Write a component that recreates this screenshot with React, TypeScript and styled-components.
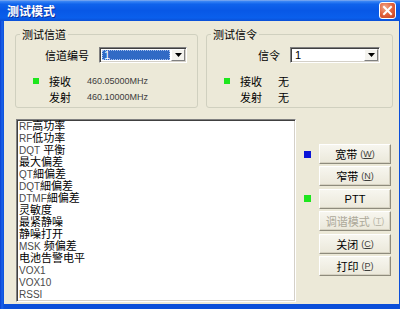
import styled, { createGlobalStyle } from 'styled-components';

const GlobalStyle = createGlobalStyle`
  html, body {
    margin: 0;
    padding: 0;
    background: #ffffff;
  }
  body {
    font-family: "Liberation Sans", "Noto Sans CJK SC", sans-serif;
    font-size: 11px;
    color: #000;
  }
`;

const listItems = [
  'RF高功率',
  'RF低功率',
  'DQT 平衡',
  '最大偏差',
  'QT細偏差',
  'DQT細偏差',
  'DTMF細偏差',
  '灵敏度',
  '最紧静噪',
  '静噪打开',
  'MSK 频偏差',
  '电池告警电平',
  'VOX1',
  'VOX10',
  'RSSI',
];

const sideButtons = [
  { label: '宽带', key: 'W', lamp: 'blue' },
  { label: '窄带', key: 'N', lamp: '' },
  { label: 'PTT', key: '', lamp: 'green' },
  { label: '调谐模式', key: 'T', lamp: '', disabled: true },
  { label: '关闭', key: 'C', lamp: '' },
  { label: '打印', key: 'P', lamp: '' },
];

// split latin runs so they can get the thinner grey look
const renderMixed = (text: string) =>
  text.split(/([A-Za-z0-9]+)/).map((part, i) =>
    /^[A-Za-z0-9]+$/.test(part) ? <Latin key={i}>{part}</Latin> : <span key={i}>{part}</span>
  );

const App = () => {
  return (
    <>
      <GlobalStyle />
      <Window>
        <TitleBar>
          <TitleText>测试模式</TitleText>
          <CloseButton>
            <svg width="11" height="11" viewBox="0 0 11 11">
              <path d="M2 2 L9 9 M9 2 L2 9" stroke="#fff" strokeWidth="2" strokeLinecap="square" />
            </svg>
          </CloseButton>
        </TitleBar>
        <Frame>
          <Body>
            <TopRow>
              <Group $width={183}>
                <Legend>测试信道</Legend>
                <SelectRow>
                  <FieldLabel>信道编号</FieldLabel>
                  <Combo $width={88}>
                    <ComboValue $selected>1</ComboValue>
                    <ComboArrow>
                      <svg width="7" height="4" viewBox="0 0 7 4">
                        <path d="M0 0 H7 L3.5 4 Z" fill="#000" />
                      </svg>
                    </ComboArrow>
                  </Combo>
                </SelectRow>
                <StatusGrid>
                  <Lamp $color="#1ee61e" />
                  <StatusLabel>接收</StatusLabel>
                  <Freq>460.05000MHz</Freq>
                  <span />
                  <StatusLabel>发射</StatusLabel>
                  <Freq>460.10000MHz</Freq>
                </StatusGrid>
              </Group>
              <Group $width={187}>
                <Legend>测试信令</Legend>
                <SelectRow>
                  <FieldLabel>信令</FieldLabel>
                  <Combo $width={90}>
                    <ComboValue>1</ComboValue>
                    <ComboArrow>
                      <svg width="7" height="4" viewBox="0 0 7 4">
                        <path d="M0 0 H7 L3.5 4 Z" fill="#000" />
                      </svg>
                    </ComboArrow>
                  </Combo>
                </SelectRow>
                <StatusGrid>
                  <Lamp $color="#1ee61e" />
                  <StatusLabel>接收</StatusLabel>
                  <StatusLabel>无</StatusLabel>
                  <span />
                  <StatusLabel>发射</StatusLabel>
                  <StatusLabel>无</StatusLabel>
                </StatusGrid>
              </Group>
            </TopRow>
            <BottomRow>
              <ListBox>
                {listItems.map((item) => (
                  <ListItem key={item}>{renderMixed(item)}</ListItem>
                ))}
              </ListBox>
              <SideColumn>
                {sideButtons.map((b) => (
                  <SideRow key={b.label}>
                    <LampSlot>
                      {b.lamp === 'blue' && <SideLamp $color="#0a14d8" />}
                      {b.lamp === 'green' && <SideLamp $color="#1ee61e" />}
                    </LampSlot>
                    <PushButton $disabled={b.disabled}>
                      <span>{b.label}</span>
                      {b.key && (
                        <Accel>
                          (<u>{b.key}</u>)
                        </Accel>
                      )}
                    </PushButton>
                  </SideRow>
                ))}
              </SideColumn>
            </BottomRow>
          </Body>
        </Frame>
      </Window>
    </>
  );
};

const Window = styled.div`
  width: 400px;
  height: 309px;
  display: flex;
  flex-direction: column;
  overflow: hidden;
  background: #0b4fd9;
`;

const TitleBar = styled.div`
  height: 21px;
  flex-shrink: 0;
  display: flex;
  align-items: center;
  justify-content: space-between;
  padding: 0 4px 0 7px;
  background: linear-gradient(
    to bottom,
    #8fb3ee 0%,
    #3a86f5 6%,
    #0f63ec 20%,
    #0858e6 50%,
    #0a5fec 85%,
    #0a4fd6 100%
  );
`;

const TitleText = styled.div`
  font-family: "Noto Sans CJK SC", sans-serif;
  font-size: 12px;
  font-weight: 700;
  line-height: 14px;
  color: #fff;
  text-shadow: 1px 1px 0 #0a2e9c;
`;

const CloseButton = styled.div`
  width: 17px;
  height: 17px;
  box-sizing: border-box;
  border: 1px solid #ffffff;
  border-radius: 3px;
  display: flex;
  align-items: center;
  justify-content: center;
  background: radial-gradient(circle at 35% 30%, #f3a98c 0%, #e2623c 50%, #c2401f 100%);
`;

const Frame = styled.div`
  flex: 1;
  display: flex;
  padding: 0 3px 5px 4px;
  background: linear-gradient(to right, #0a3fd0, #1a63ea 2px, #0b4fd9 4px);
`;

const Body = styled.div`
  flex: 1;
  display: flex;
  flex-direction: column;
  padding: 7px 6px 0 11px;
  background: #ece9d8;
`;

const TopRow = styled.div`
  display: flex;
  gap: 8px;
`;

const Group = styled.fieldset<{ $width: number }>`
  width: ${(p) => p.$width}px;
  height: 80px;
  box-sizing: border-box;
  margin: 0;
  padding: 7px 0 0 17px;
  border: 1px solid #d0d0bf;
  border-radius: 3px;
`;

const Legend = styled.legend`
  font-family: "Noto Sans CJK SC", sans-serif;
  font-size: 11px;
  line-height: 12px;
  padding: 0 2px;
  margin-left: -13px;
  color: #000;
`;

const SelectRow = styled.div`
  display: flex;
  align-items: center;
  height: 16px;
`;

const FieldLabel = styled.div`
  width: 56px;
  text-align: right;
  margin-right: 10px;
  font-family: "Noto Sans CJK SC", sans-serif;
  font-size: 11px;
  line-height: 12px;
`;

const Combo = styled.div<{ $width: number }>`
  width: ${(p) => p.$width}px;
  height: 16px;
  box-sizing: border-box;
  display: flex;
  padding: 1px;
  background: #fff;
  border: 1px solid;
  border-color: #808080 #ffffff #ffffff #808080;
  box-shadow: inset 1px 1px 0 #404040, inset -1px -1px 0 #d4d0c8;
`;

const ComboValue = styled.div<{ $selected?: boolean }>`
  flex: 1;
  margin: 1px;
  padding-left: 2px;
  display: flex;
  align-items: center;
  font-size: 11px;
  line-height: 11px;
  color: ${(p) => (p.$selected ? '#ffffff' : '#000')};
  background: ${(p) => (p.$selected ? '#316ac5' : 'transparent')};
  outline: ${(p) => (p.$selected ? '1px dotted #a8c0ee' : 'none')};
  outline-offset: -1px;
`;

const ComboArrow = styled.div`
  width: 14px;
  box-sizing: border-box;
  display: flex;
  align-items: center;
  justify-content: center;
  background: #f4f3ee;
  border: 1px solid;
  border-color: #ffffff #808080 #808080 #ffffff;
`;

const StatusGrid = styled.div`
  display: grid;
  grid-template-columns: 16px 38px auto;
  grid-auto-rows: 16px;
  align-items: center;
  margin-top: 10px;
`;

const Lamp = styled.div<{ $color: string }>`
  width: 6px;
  height: 6px;
  background: ${(p) => p.$color};
`;

const StatusLabel = styled.div`
  font-family: "Noto Sans CJK SC", sans-serif;
  font-size: 11px;
  line-height: 12px;
`;

const Freq = styled.div`
  font-family: "Liberation Sans", sans-serif;
  font-size: 9px;
  color: #3c3c3c;
`;

const BottomRow = styled.div`
  display: flex;
  align-items: flex-start;
  margin-top: 11px;
`;

const ListBox = styled.div`
  width: 280px;
  height: 183px;
  box-sizing: border-box;
  margin-left: 1px;
  padding: 0 0 0 2px;
  background: #fff;
  border: 1px solid;
  border-color: #808080 #ffffff #ffffff #808080;
  box-shadow: inset 1px 1px 0 #404040, inset -1px -1px 0 #d4d0c8;
  overflow: hidden;
`;

const ListItem = styled.div`
  height: 12px;
  line-height: 12px;
  font-size: 11px;
  font-family: "Liberation Sans", "Noto Sans CJK SC", sans-serif;
  white-space: nowrap;
`;

const Latin = styled.span`
  color: #4a4a4a;
  font-size: 10px;
`;

const SideColumn = styled.div`
  display: flex;
  flex-direction: column;
  gap: 2.4px;
  margin-left: 8px;
  padding-top: 25px;
`;

const SideRow = styled.div`
  display: flex;
  align-items: center;
`;

const LampSlot = styled.div`
  width: 15px;
  display: flex;
  align-items: center;
`;

const SideLamp = styled.div<{ $color: string }>`
  width: 7px;
  height: 7px;
  background: ${(p) => p.$color};
`;

const PushButton = styled.div<{ $disabled?: boolean }>`
  width: 72px;
  height: 20px;
  box-sizing: border-box;
  display: flex;
  align-items: center;
  justify-content: center;
  gap: 3px;
  font-family: "Liberation Sans", "Noto Sans CJK SC", sans-serif;
  font-size: 11px;
  color: ${(p) => (p.$disabled ? '#aca899' : '#000')};
  background: linear-gradient(to bottom, #f7f6ef, #ebe8da);
  border: 1px solid;
  border-color: #ffffff #8e8b7c #8e8b7c #ffffff;
  box-shadow: inset -1px -1px 0 #d6d2c2;
`;

const Accel = styled.span`
  font-family: "Liberation Sans", sans-serif;
  font-size: 9px;
  color: inherit;
  opacity: 0.75;
`;

export default App;
